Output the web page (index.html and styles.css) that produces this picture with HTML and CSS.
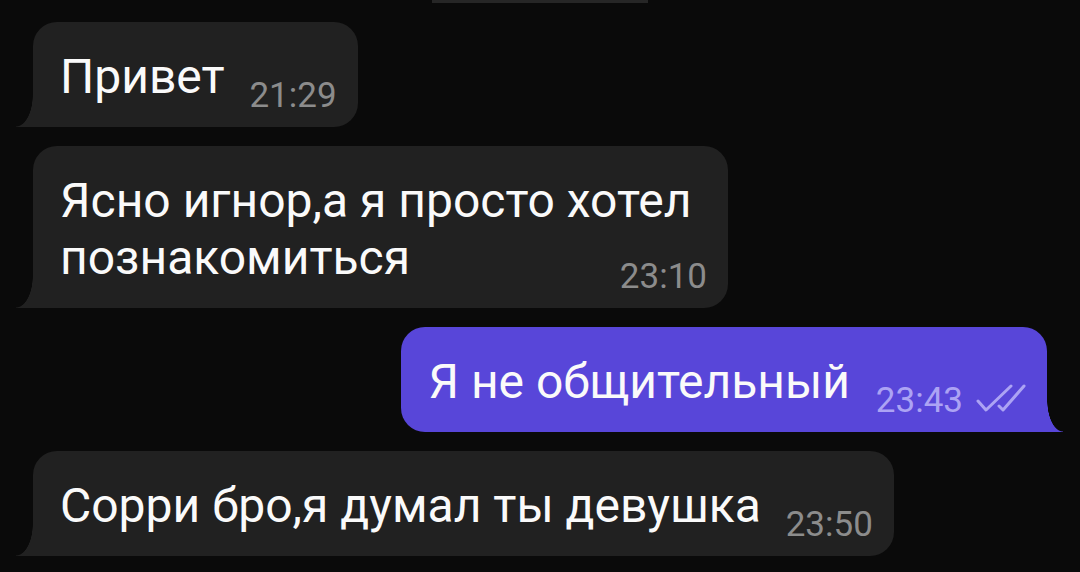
FILE: index.html
```html
<!DOCTYPE html>
<html lang="ru">

<head>
	<meta charset="UTF-8">
	<meta name="viewport" content="width=device-width, initial-scale=1.0">
	<title>Чат</title>
	<link rel="stylesheet" href="styles.css">
</head>

<body>
	<div class="chat">
		<!-- edge of the date pill scrolled off the top -->
		<div class="pill-edge"></div>

		<div class="bubble in">
			<div class="text">Привет<span class="spacer"></span></div>
			<div class="meta"><span class="time">21:29</span></div>
		</div>

		<div class="bubble in narrow">
			<div class="text"><span>Ясно игнор,а я просто хотел</span> <span>познакомиться</span><span class="spacer"></span></div>
			<div class="meta"><span class="time">23:10</span></div>
		</div>

		<div class="bubble out">
			<div class="text">Я не общительный<span class="spacer"></span></div>
			<div class="meta">
				<span class="time">23:43</span>
				<svg class="checks" width="50" height="30" viewBox="0 0 50 30">
					<path d="M2 18 L10 27 L35 3" />
					<path d="M23 23 L27 27 L48 3" />
				</svg>
			</div>
		</div>

		<div class="bubble in">
			<div class="text">Сорри бро,я думал ты девушка<span class="spacer"></span></div>
			<div class="meta"><span class="time">23:50</span></div>
		</div>
	</div>
</body>

</html>
```

FILE: styles.css
```css
body {
	margin: 0;
	padding: 0;
	background-color: #0a0a0a;
	font-family: Roboto, "Noto Sans", sans-serif;
}

.chat {
	display: flex;
	flex-direction: column;
	gap: 19px;
	padding: 0 33px;
}

.pill-edge {
	align-self: center;
	width: 216px;
	height: 3px;
	background-color: #262626;
}

.bubble {
	position: relative;
	display: grid;
	padding: 26px 21px 14px 27px;
	border-radius: 24px;
	color: #fafafa;
	font-size: 48px;
	line-height: 57px;
}

.bubble .text,
.bubble .meta {
	grid-area: 1 / 1;
}

.bubble .text {
	padding-bottom: 8px;
}

.spacer {
	display: inline-block;
	width: 112px;
}

.bubble .meta {
	justify-self: end;
	align-self: end;
	display: flex;
	align-items: flex-end;
	gap: 13px;
	font-size: 35px;
	line-height: 35px;
}

.in {
	align-self: flex-start;
	background-color: #212121;
	border-bottom-left-radius: 0;
}

.in .meta {
	color: #8c8c8c;
}

.in::before {
	content: "";
	position: absolute;
	left: -17px;
	bottom: 0;
	width: 17px;
	height: 32px;
	background: radial-gradient(17px 32px at 0 0, transparent 97%, #212121 100%);
}

.narrow {
	max-width: 647px;
}

.out {
	align-self: flex-end;
	background-color: #5846d9;
	border-bottom-right-radius: 0;
}

.out .spacer {
	width: 176px;
}

.out .meta {
	color: #aca3f4;
}

.out::after {
	content: "";
	position: absolute;
	right: -16px;
	bottom: 0;
	width: 16px;
	height: 32px;
	background: radial-gradient(16px 32px at 100% 0, transparent 97%, #5846d9 100%);
}

.checks {
	margin-bottom: 5px;
	fill: none;
	stroke: #aca3f4;
	stroke-width: 3;
	stroke-linecap: round;
	stroke-linejoin: round;
}
```
